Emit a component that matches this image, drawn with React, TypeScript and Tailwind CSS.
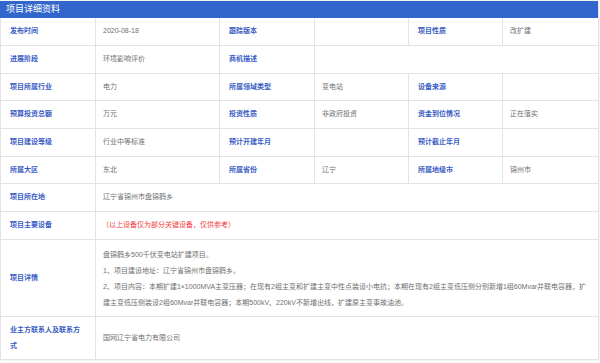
import React from "react";

const font = { fontFamily: '"Liberation Sans","Noto Sans CJK SC",sans-serif' };

type Cell = { t: string; kind: "label" | "value" | "red" | "detail"; span?: number };

function L(t: string): Cell {
  return { t, kind: "label" };
}
function V(t: string, span?: number): Cell {
  return { t, kind: "value", span };
}

const rows: { h: string; cells: Cell[] }[] = [
  { h: "h-[28px]", cells: [L("发布时间"), V("2020-08-18"), L("跟踪版本"), V(""), L("项目性质"), V("改扩建")] },
  { h: "h-[28px]", cells: [L("进展阶段"), V("环境影响评价"), L("商机描述"), V("", 3)] },
  { h: "h-[27px]", cells: [L("项目所属行业"), V("电力"), L("所属领域类型"), V("变电站"), L("设备来源"), V("")] },
  { h: "h-[28px]", cells: [L("预算投资总额"), V("万元"), L("投资性质"), V("非政府投资"), L("资金到位情况"), V("正在落实")] },
  { h: "h-[28px]", cells: [L("项目建设等级"), V("行业中等标准"), L("预计开建年月"), V(""), L("预计截止年月"), V("")] },
  { h: "h-[27px]", cells: [L("所属大区"), V("东北"), L("所属省份"), V("辽宁"), L("所属地级市"), V("锦州市")] },
  { h: "h-[28px]", cells: [L("项目所在地"), V("辽宁省锦州市盘锦鹳乡", 5)] },
  { h: "h-[28px]", cells: [L("项目主要设备"), { t: "（以上设备仅为部分关键设备，仅供参考）", kind: "red", span: 5 }] },
];

const spanCls: Record<number, string> = {
  1: "col-span-1",
  3: "col-span-3",
  5: "col-span-5",
};

function CellView({ c, h }: { c: Cell; h: string }) {
  const span = spanCls[c.span ?? 1];
  if (c.kind === "label") {
    return (
      <div className={`${span} ${h} flex items-center pl-[9px] border-r border-b border-[#e3e3e3] text-[7px] font-bold text-[#3a5cc5]`}>
        {c.t}
      </div>
    );
  }
  if (c.kind === "red") {
    return (
      <div className={`${span} ${h} flex items-center pl-[6px] border-r border-b border-[#e3e3e3] text-[7px] text-[#f53b3b]`}>
        {c.t}
      </div>
    );
  }
  return (
    <div className={`${span} ${h} flex items-center pl-[7px] border-r border-b border-[#e3e3e3] text-[7px] text-[#707070]`}>
      {c.t}
    </div>
  );
}

export default function App() {
  return (
    <div className="w-[600px] h-[363px] bg-white overflow-hidden pt-[1px]" style={font}>
      <div className="w-[598px] shadow-[1px_0_2px_rgba(0,0,0,0.12)]">
        <div className="h-[17px] bg-[#3366cc] text-white text-[9px] flex items-center pl-[6px]">项目详细资料</div>
        <div className="grid grid-cols-[95px_124px_95px_94px_94px_96px] border-l border-[#e3e3e3]">
          {rows.map((r, i) => (
            <React.Fragment key={i}>
              {r.cells.map((c, j) => (
                <CellView key={j} c={c} h={r.h} />
              ))}
            </React.Fragment>
          ))}
          <div className="h-[77px] flex items-center pl-[9px] border-r border-b border-[#e3e3e3] text-[7px] font-bold text-[#3a5cc5]">
            项目详情
          </div>
          <div className="col-span-5 h-[77px] pl-[7px] pr-[10px] pt-[7px] border-r border-b border-[#e3e3e3] text-[7px] leading-[16px] text-[#707070]">
            <div>盘锦鹳乡500千伏变电站扩建项目。</div>
            <div>1、项目建设地址：辽宁省锦州市盘锦鹳乡。</div>
            <div>
              2、项目内容：本期扩建1×1000MVA主变压器；在现有2组主变和扩建主变中性点装设小电抗；本期在现有2组主变低压侧分别新增1组60Mvar并联电容器，扩建主变低压侧装设2组60Mvar并联电容器；本期500kV、220kV不新增出线，扩建原主变事故油池。
            </div>
          </div>
          <div className="h-[43px] flex items-center pl-[9px] pr-[4px] border-r border-b border-[#e3e3e3] text-[7px] leading-[16px] font-bold text-[#3a5cc5]">
            <div>
              业主方联系人及联系方
              <br />
              式
            </div>
          </div>
          <div className="col-span-5 h-[43px] flex items-center pl-[7px] border-r border-b border-[#e3e3e3] text-[7px] text-[#707070]">
            国网辽宁省电力有限公司
          </div>
        </div>
      </div>
    </div>
  );
}
